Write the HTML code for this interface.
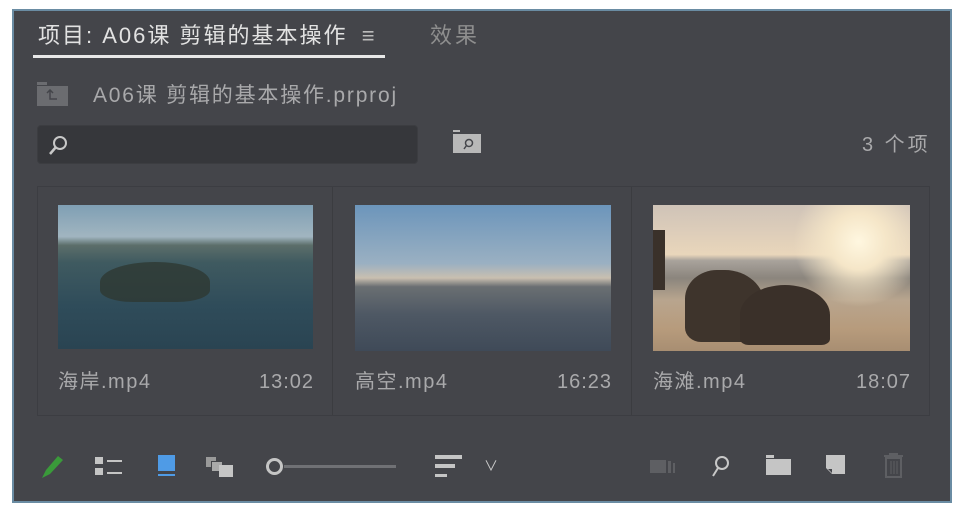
<!DOCTYPE html>
<html><head><meta charset="utf-8"><style>
*{margin:0;padding:0;box-sizing:border-box}
body{width:964px;height:526px;background:#fff;position:relative;overflow:hidden;font-family:"Liberation Sans","Noto Sans CJK SC",sans-serif;color:#b4b4b4}
#p{position:absolute;left:12px;top:9px;width:940px;height:494px;background:#44454a;border:2px solid #6a8ca3}
.a{position:absolute}
.t{font-size:21px;white-space:nowrap;line-height:28px}
.cell{position:absolute;top:187px;height:228px;border-right:1px solid #3b3c40}
.th{position:absolute;top:205px}
.lab{position:absolute;top:368px;font-size:20px;line-height:28px;color:#a9a9ab;white-space:nowrap;letter-spacing:1.5px}
.tm{letter-spacing:1px}
.ic{position:absolute;background:#c5c5c5}
</style></head><body>
<div id="p"></div>
<div class="a t" style="left:38px;top:22px;color:#e2e2e2;font-size:22px;letter-spacing:2px">项目: A06课 剪辑的基本操作 <span style="color:#bbb;letter-spacing:0">&nbsp;≡</span></div>
<div class="a" style="left:33px;top:55px;width:352px;height:3px;background:#e8e8e8"></div>
<div class="a t" style="left:430px;top:22px;color:#8e8e8e;font-size:22px;letter-spacing:3px">效果</div>
<div class="a" style="left:37px;top:86px;width:31px;height:20px;background:#6b6c70"></div>
<div class="a" style="left:37px;top:82px;width:10px;height:3px;background:#6b6c70"></div>
<svg class="a" style="left:44px;top:89px" width="16" height="14"><path d="M3 4L6 1L9 4M6 1V10H13" fill="none" stroke="#44454a" stroke-width="1.5"/></svg>
<div class="a t" style="left:93px;top:82px;color:#a9a9ab;font-size:21px;letter-spacing:1.8px">A06课 剪辑的基本操作.prproj</div>
<div class="a" style="left:37px;top:125px;width:381px;height:39px;background:#36373b;border-radius:4px;border:1px solid #3c3d41"></div>
<svg class="a" style="left:46px;top:132px" width="26" height="26"><circle cx="14" cy="11" r="6" fill="none" stroke="#c8c8c8" stroke-width="2"/><line x1="10" y1="15" x2="4" y2="22" stroke="#c8c8c8" stroke-width="2.5"/></svg>
<div class="a" style="left:453px;top:134px;width:28px;height:19px;background:#b8b8b8"></div>
<div class="a" style="left:453px;top:130px;width:7px;height:2px;background:#b8b8b8"></div>
<svg class="a" style="left:460px;top:136px" width="16" height="16"><circle cx="9" cy="7" r="3.5" fill="none" stroke="#44454a" stroke-width="1.5"/><line x1="6.5" y1="9.5" x2="4" y2="13" stroke="#44454a" stroke-width="1.5"/></svg>
<div class="a t" style="left:862px;top:131px;color:#a9a9ab;font-size:20px;letter-spacing:3px">3 个项</div>
<div class="a" style="left:37px;top:186px;width:893px;height:230px;border:1px solid #3c3d42"></div>
<div class="cell" style="left:38px;width:295px"></div>
<div class="cell" style="left:333px;width:299px"></div>
<div class="th" style="left:58px;width:255px;height:144px;background:linear-gradient(180deg,#7f9fb4 0%,#a1b5c0 22%,#5c6e6a 28%,#3f5a60 40%,#2f4c5a 70%,#2a4452 100%)"></div>
<div class="th" style="left:100px;top:262px;width:110px;height:40px;background:#2e3832;border-radius:50% 50% 30% 30%;opacity:.8"></div>
<div class="th" style="left:355px;width:256px;height:146px;background:linear-gradient(180deg,#6c95bb 0%,#9ab0c2 40%,#c9bfb0 50%,#6a6f72 56%,#4e5864 75%,#3f4a58 100%)"></div>
<div class="th" style="left:653px;width:257px;height:146px;background:radial-gradient(circle at 80% 25%,#fff7e0 0,#f5e6c8 12%,transparent 28%),linear-gradient(180deg,#cfc3b8 0%,#e9d6bb 34%,#a9a39c 38%,#8b857d 50%,#b8a58e 65%,#b79b7c 85%,#a88e72 100%)"></div>
<div class="th" style="left:653px;top:230px;width:12px;height:60px;background:#3a312a"></div>
<div class="th" style="left:685px;top:270px;width:80px;height:72px;background:#3e342c;border-radius:40% 50% 10% 20%"></div>
<div class="th" style="left:740px;top:285px;width:90px;height:60px;background:#3a3029;border-radius:50% 50% 10% 10%"></div>
<div class="lab" style="left:58px">海岸.mp4</div><div class="lab tm" style="left:259px">13:02</div>
<div class="lab" style="left:355px">高空.mp4</div><div class="lab tm" style="left:557px">16:23</div>
<div class="lab" style="left:653px">海滩.mp4</div><div class="lab tm" style="left:856px">18:07</div>
<svg class="a" style="left:38px;top:454px" width="30" height="26"><path d="M4 24 L8 16 L20 2 L25 6 L12 20 Z" fill="#3a9a3a"/></svg>
<div class="ic" style="left:95px;top:457px;width:8px;height:7px"></div><div class="ic" style="left:95px;top:468px;width:8px;height:7px"></div>
<div class="ic" style="left:107px;top:460px;width:15px;height:2px"></div><div class="ic" style="left:107px;top:472px;width:15px;height:2px"></div>
<div class="ic" style="left:158px;top:455px;width:17px;height:16px;background:#4f9be6"></div><div class="ic" style="left:158px;top:474px;width:17px;height:2px;background:#4f9be6"></div>
<div class="ic" style="left:206px;top:457px;width:10px;height:10px;background:#9a9a9a"></div>
<div class="ic" style="left:211px;top:461px;width:12px;height:11px;background:#aaa;border:1px solid #44454a"></div>
<div class="ic" style="left:219px;top:465px;width:14px;height:12px"></div>
<div class="a" style="left:266px;top:458px;width:17px;height:17px;border:3px solid #c5c5c5;border-radius:50%"></div>
<div class="a" style="left:284px;top:465px;width:112px;height:3px;background:#707175"></div>
<div class="ic" style="left:435px;top:455px;width:27px;height:4px"></div><div class="ic" style="left:435px;top:464px;width:20px;height:4px"></div><div class="ic" style="left:435px;top:474px;width:12px;height:3px"></div>
<div class="a" style="left:484px;top:456px;font-size:14px;color:#ccc">&#8744;</div>
<div class="ic" style="left:650px;top:460px;width:16px;height:13px;background:#5e5f63"></div><div class="ic" style="left:668px;top:461px;width:3px;height:12px;background:#5e5f63"></div><div class="ic" style="left:673px;top:463px;width:2px;height:10px;background:#5e5f63"></div>
<svg class="a" style="left:708px;top:454px" width="24" height="26"><circle cx="14" cy="9" r="6" fill="none" stroke="#c8c8c8" stroke-width="2"/><line x1="10" y1="14" x2="5" y2="22" stroke="#c8c8c8" stroke-width="2"/></svg>
<div class="ic" style="left:766px;top:459px;width:25px;height:16px"></div><div class="ic" style="left:766px;top:455px;width:8px;height:3px"></div>
<svg class="a" style="left:826px;top:455px" width="22" height="22"><path d="M0 0H19V19H6L0 13Z" fill="#c5c5c5"/><path d="M2 14L6 14L6 18Z" fill="#44454a"/></svg>
<svg class="a" style="left:882px;top:453px" width="24" height="26"><path d="M2 3H21M8 3V1H15V3M4 5H19V24H4Z" fill="none" stroke="#5e5f63" stroke-width="2"/><path d="M9 8V21M12 8V21M15 8V21" stroke="#5e5f63"/></svg>
</body></html>
